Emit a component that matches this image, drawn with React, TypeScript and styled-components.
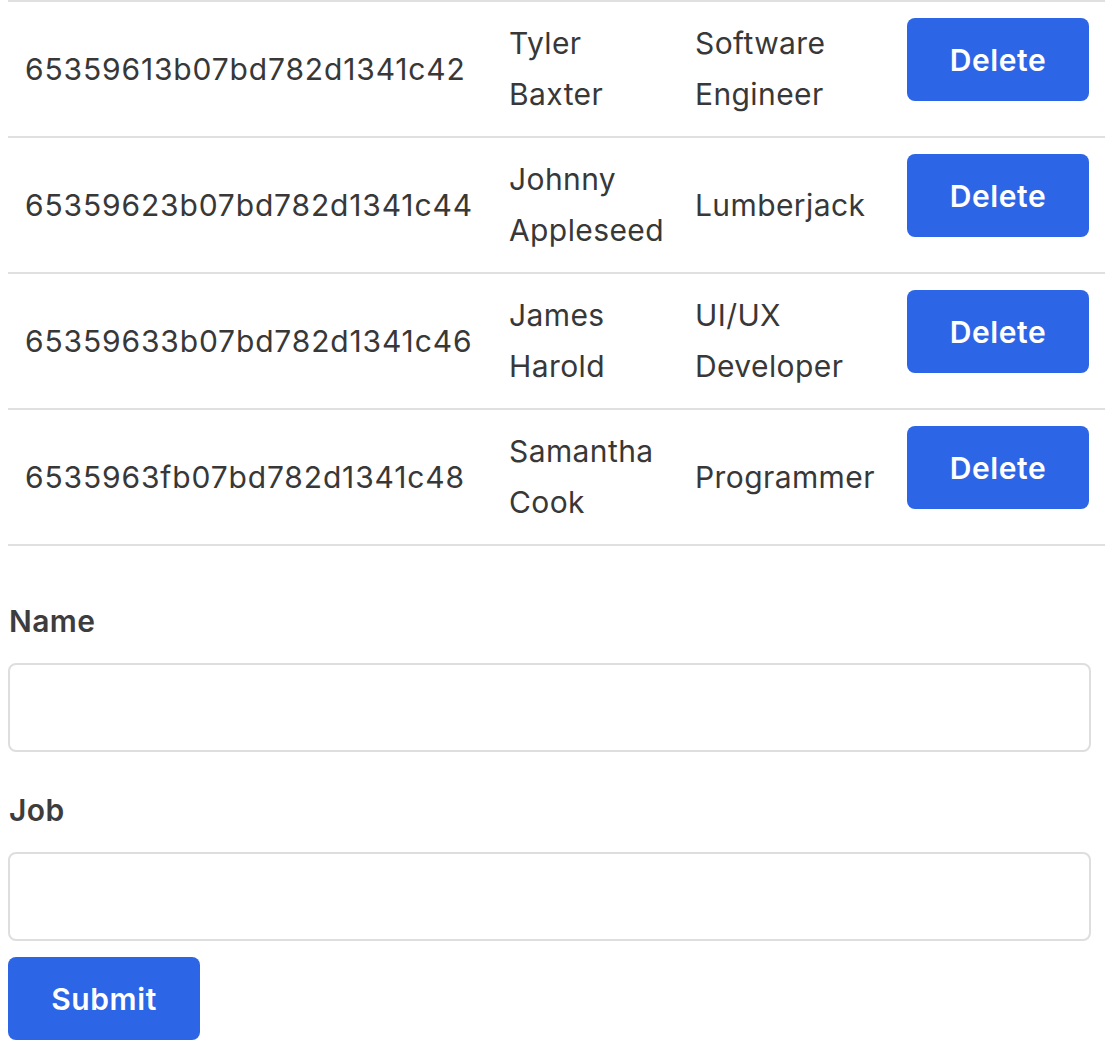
import * as React from 'react';
import styled, { createGlobalStyle } from 'styled-components';

interface Person {
  id: string
  name: string
  job: string
}

const people: Person[] = [
  { id: '65359613b07bd782d1341c42', name: 'Tyler Baxter', job: 'Software Engineer' },
  { id: '65359623b07bd782d1341c44', name: 'Johnny Appleseed', job: 'Lumberjack' },
  { id: '65359633b07bd782d1341c46', name: 'James Harold', job: 'UI/UX Developer' },
  { id: '6535963fb07bd782d1341c48', name: 'Samantha Cook', job: 'Programmer' },
];

const GlobalStyle = createGlobalStyle`
  html, body {
    margin: 0;
    background: #fff;
  }
  body {
    font-family: Inter, "Noto Sans", sans-serif;
    font-size: 30px;
    letter-spacing: 0.4px;
    line-height: 51px;
    color: #383838;
  }
`;

const Page = styled.div`
  padding: 0 8px;
`;

const Table = styled.table`
  width: 1097px;
  border-collapse: collapse;
  table-layout: fixed;
  border-top: 2px solid #e0e0e0;
`;

const Row = styled.tr`
  border-bottom: 2px solid #e0e0e0;
`;

const Cell = styled.td<{ $top?: boolean; $id?: boolean }>`
  padding: 16px 17px;
  vertical-align: ${p => (p.$top ? 'top' : 'middle')};
  letter-spacing: ${p => (p.$id ? '0.85px' : '0.4px')};
`;

const BlueButton = styled.button<{ $width: number }>`
  width: ${p => p.$width}px;
  height: 83px;
  border: none;
  border-radius: 8px;
  background: #2c66e6;
  color: #fff;
  font-family: Inter, "Noto Sans", sans-serif;
  font-size: 30px;
  letter-spacing: 0.6px;
  font-weight: 600;
  cursor: pointer;
`;

const Form = styled.form`
  display: flex;
  flex-direction: column;
  align-items: flex-start;
  padding-top: 50px;
`;

const Label = styled.label`
  font-weight: 600;
  color: #3d3d3d;
  margin-left: 1px;
`;

const Input = styled.input`
  box-sizing: border-box;
  width: 1083px;
  height: 89px;
  margin: 16px 0 33px;
  border: 2px solid #dedede;
  border-radius: 8px;
  padding: 0 16px;
  font-family: Inter, "Noto Sans", sans-serif;
  font-size: 28px;
  &:last-of-type {
    margin-bottom: 16px;
  }
`;

export default function App() {
  return (
    <Page>
      <GlobalStyle />
      <Table>
        <colgroup>
          <col style={{ width: 484 }} />
          <col style={{ width: 186 }} />
          <col style={{ width: 212 }} />
          <col style={{ width: 215 }} />
        </colgroup>
        <tbody>
          {people.map(p => (
            <Row key={p.id}>
              <Cell $id>{p.id}</Cell>
              <Cell>{p.name}</Cell>
              <Cell>{p.job}</Cell>
              <Cell $top>
                <BlueButton $width={182}>Delete</BlueButton>
              </Cell>
            </Row>
          ))}
        </tbody>
      </Table>
      <Form onSubmit={e => e.preventDefault()}>
        <Label htmlFor="name">Name</Label>
        <Input id="name" type="text" />
        <Label htmlFor="job">Job</Label>
        <Input id="job" type="text" />
        <BlueButton $width={192} type="submit">Submit</BlueButton>
      </Form>
    </Page>
  );
}
